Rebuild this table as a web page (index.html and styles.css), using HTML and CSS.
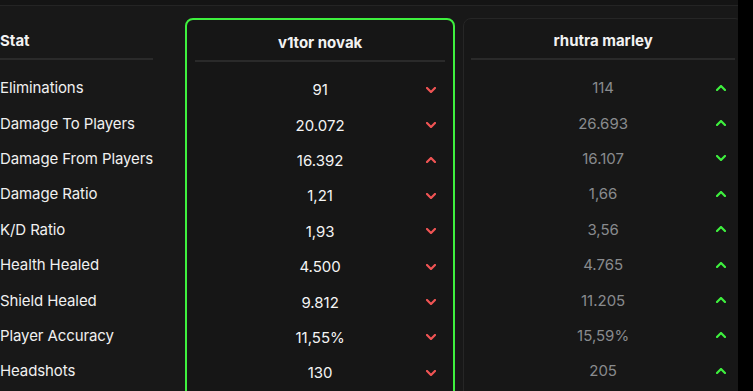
FILE: index.html
```html
<!DOCTYPE html>
<html>
<head>
<meta charset="utf-8">
<link rel="stylesheet" href="styles.css">
</head>
<body>
<div class="frame">
  <div class="topbar"></div>
  <div class="compare">
    <div class="stats">
      <div class="head">Stat</div>
      <div class="row label">Eliminations</div>
      <div class="row label">Damage To Players</div>
      <div class="row label">Damage From Players</div>
      <div class="row label">Damage Ratio</div>
      <div class="row label">K/D Ratio</div>
      <div class="row label">Health Healed</div>
      <div class="row label">Shield Healed</div>
      <div class="row label">Player Accuracy</div>
      <div class="row label">Headshots</div>
    </div>
    <div class="card card-active">
      <div class="head">v1tor novak</div>
      <div class="row"><span></span><span class="val">91</span><svg class="ind bad" viewBox="0 0 10 6"><polyline points="1,1 5,5 9,1"/></svg></div>
      <div class="row"><span></span><span class="val">20.072</span><svg class="ind bad" viewBox="0 0 10 6"><polyline points="1,1 5,5 9,1"/></svg></div>
      <div class="row"><span></span><span class="val">16.392</span><svg class="ind bad" viewBox="0 0 10 6"><polyline points="1,5 5,1 9,5"/></svg></div>
      <div class="row"><span></span><span class="val">1,21</span><svg class="ind bad" viewBox="0 0 10 6"><polyline points="1,1 5,5 9,1"/></svg></div>
      <div class="row"><span></span><span class="val">1,93</span><svg class="ind bad" viewBox="0 0 10 6"><polyline points="1,1 5,5 9,1"/></svg></div>
      <div class="row"><span></span><span class="val">4.500</span><svg class="ind bad" viewBox="0 0 10 6"><polyline points="1,1 5,5 9,1"/></svg></div>
      <div class="row"><span></span><span class="val">9.812</span><svg class="ind bad" viewBox="0 0 10 6"><polyline points="1,1 5,5 9,1"/></svg></div>
      <div class="row"><span></span><span class="val">11,55%</span><svg class="ind bad" viewBox="0 0 10 6"><polyline points="1,1 5,5 9,1"/></svg></div>
      <div class="row"><span></span><span class="val">130</span><svg class="ind bad" viewBox="0 0 10 6"><polyline points="1,1 5,5 9,1"/></svg></div>
    </div>
    <div class="card card-other">
      <div class="head">rhutra marley</div>
      <div class="row"><span></span><span class="val">114</span><svg class="ind good" viewBox="0 0 10 6"><polyline points="1,5 5,1 9,5"/></svg></div>
      <div class="row"><span></span><span class="val">26.693</span><svg class="ind good" viewBox="0 0 10 6"><polyline points="1,5 5,1 9,5"/></svg></div>
      <div class="row"><span></span><span class="val">16.107</span><svg class="ind good" viewBox="0 0 10 6"><polyline points="1,1 5,5 9,1"/></svg></div>
      <div class="row"><span></span><span class="val">1,66</span><svg class="ind good" viewBox="0 0 10 6"><polyline points="1,5 5,1 9,5"/></svg></div>
      <div class="row"><span></span><span class="val">3,56</span><svg class="ind good" viewBox="0 0 10 6"><polyline points="1,5 5,1 9,5"/></svg></div>
      <div class="row"><span></span><span class="val">4.765</span><svg class="ind good" viewBox="0 0 10 6"><polyline points="1,5 5,1 9,5"/></svg></div>
      <div class="row"><span></span><span class="val">11.205</span><svg class="ind good" viewBox="0 0 10 6"><polyline points="1,5 5,1 9,5"/></svg></div>
      <div class="row"><span></span><span class="val">15,59%</span><svg class="ind good" viewBox="0 0 10 6"><polyline points="1,5 5,1 9,5"/></svg></div>
      <div class="row"><span></span><span class="val">205</span><svg class="ind good" viewBox="0 0 10 6"><polyline points="1,5 5,1 9,5"/></svg></div>
    </div>
  </div>
</div>
</body>
</html>
```
FILE: styles.css
```css
html, body {
  margin: 0;
  padding: 0;
  background: #000;
  height: 100%;
}
body {
  font-family: Inter, "Noto Sans", sans-serif;
  color: #f2f2f2;
  overflow: hidden;
}
.frame {
  width: 738px;
  height: 391px;
  background: #181818;
  overflow: hidden;
}
.topbar {
  height: 5px;
  background: #141414;
  border-bottom: 1px solid #242424;
}
.compare {
  display: flex;
  align-items: flex-start;
  padding-top: 12px;
}
.stats {
  flex: 0 0 153px;
  margin-right: 32px;
}
.card {
  flex-shrink: 0;
  box-sizing: border-box;
  border-radius: 8px;
  height: 400px;
}
.card-active {
  width: 270px;
  border: 2px solid #3ef03e;
  padding: 0 8px;
  background: #161616;
  margin-right: 8px;
}
.card-other {
  width: 280px;
  border: 1px solid #262626;
  padding: 0 7px;
  background: #171717;
}
.head {
  font-weight: 700;
  font-size: 15px;
  line-height: 20px;
  padding: 13px 0 7px;
  border-bottom: 2px solid #2a2a2a;
  text-align: center;
  margin-bottom: 10px;
}
.stats .head {
  text-align: left;
}
.card-other .head {
  padding-top: 12px;
}
.row {
  height: 35.4px;
  display: grid;
  grid-template-columns: 1fr auto 1fr;
  align-items: center;
  font-size: 15px;
  white-space: nowrap;
}
.label {
  display: flex;
  align-items: center;
  color: #f0f0f0;
  letter-spacing: -0.1px;
}
.val {
  color: #f4f4f4;
}
.card-other .val {
  color: #898b8e;
}
.ind {
  justify-self: end;
  margin-right: 9px;
  width: 10px;
  height: 6px;
  fill: none;
  stroke-width: 2.2;
  stroke-linecap: square;
  stroke-linejoin: miter;
}
.ind.bad {
  stroke: #f05454;
}
.ind.good {
  stroke: #3ef03e;
}
```
